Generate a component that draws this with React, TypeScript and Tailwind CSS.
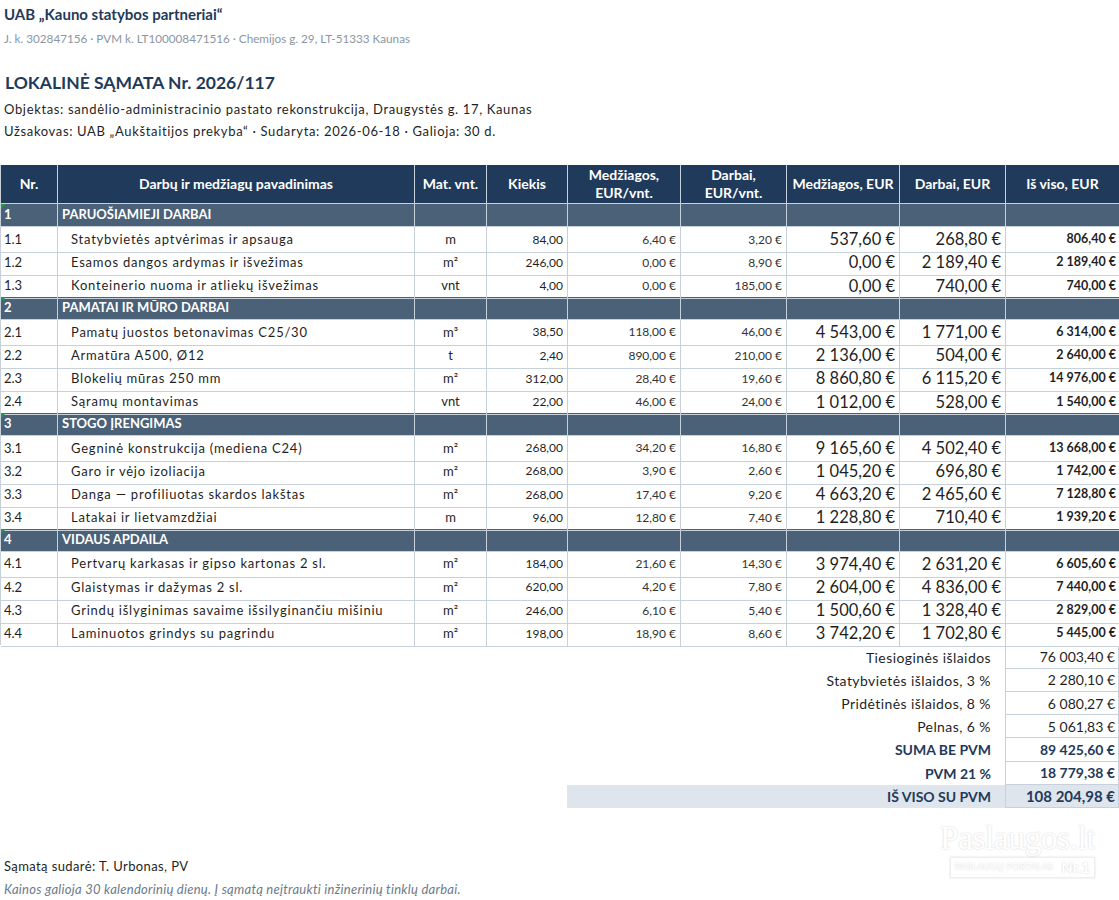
import React from 'react';

type Item = [string, string, string, string, string, string, string, string, string];
type Section = { nr: string; title: string; items: Item[] };

const SECTIONS: Section[] = [
  {
    nr: '1',
    title: 'PARUOŠIAMIEJI DARBAI',
    items: [
      ['1.1', 'Statybvietės aptvėrimas ir apsauga', 'm', '84,00', '6,40 €', '3,20 €', '537,60 €', '268,80 €', '806,40 €'],
      ['1.2', 'Esamos dangos ardymas ir išvežimas', 'm²', '246,00', '0,00 €', '8,90 €', '0,00 €', '2 189,40 €', '2 189,40 €'],
      ['1.3', 'Konteinerio nuoma ir atliekų išvežimas', 'vnt', '4,00', '0,00 €', '185,00 €', '0,00 €', '740,00 €', '740,00 €'],
    ],
  },
  {
    nr: '2',
    title: 'PAMATAI IR MŪRO DARBAI',
    items: [
      ['2.1', 'Pamatų juostos betonavimas C25/30', 'm³', '38,50', '118,00 €', '46,00 €', '4 543,00 €', '1 771,00 €', '6 314,00 €'],
      ['2.2', 'Armatūra A500, Ø12', 't', '2,40', '890,00 €', '210,00 €', '2 136,00 €', '504,00 €', '2 640,00 €'],
      ['2.3', 'Blokelių mūras 250 mm', 'm²', '312,00', '28,40 €', '19,60 €', '8 860,80 €', '6 115,20 €', '14 976,00 €'],
      ['2.4', 'Sąramų montavimas', 'vnt', '22,00', '46,00 €', '24,00 €', '1 012,00 €', '528,00 €', '1 540,00 €'],
    ],
  },
  {
    nr: '3',
    title: 'STOGO ĮRENGIMAS',
    items: [
      ['3.1', 'Gegninė konstrukcija (mediena C24)', 'm²', '268,00', '34,20 €', '16,80 €', '9 165,60 €', '4 502,40 €', '13 668,00 €'],
      ['3.2', 'Garo ir vėjo izoliacija', 'm²', '268,00', '3,90 €', '2,60 €', '1 045,20 €', '696,80 €', '1 742,00 €'],
      ['3.3', 'Danga — profiliuotas skardos lakštas', 'm²', '268,00', '17,40 €', '9,20 €', '4 663,20 €', '2 465,60 €', '7 128,80 €'],
      ['3.4', 'Latakai ir lietvamzdžiai', 'm', '96,00', '12,80 €', '7,40 €', '1 228,80 €', '710,40 €', '1 939,20 €'],
    ],
  },
  {
    nr: '4',
    title: 'VIDAUS APDAILA',
    items: [
      ['4.1', 'Pertvarų karkasas ir gipso kartonas 2 sl.', 'm²', '184,00', '21,60 €', '14,30 €', '3 974,40 €', '2 631,20 €', '6 605,60 €'],
      ['4.2', 'Glaistymas ir dažymas 2 sl.', 'm²', '620,00', '4,20 €', '7,80 €', '2 604,00 €', '4 836,00 €', '7 440,00 €'],
      ['4.3', 'Grindų išlyginimas savaime išsilyginančiu mišiniu', 'm²', '246,00', '6,10 €', '5,40 €', '1 500,60 €', '1 328,40 €', '2 829,00 €'],
      ['4.4', 'Laminuotos grindys su pagrindu', 'm²', '198,00', '18,90 €', '8,60 €', '3 742,20 €', '1 702,80 €', '5 445,00 €'],
    ],
  },
];

const TOTALS = [
  { label: 'Tiesioginės išlaidos', value: '76 003,40 €' },
  { label: 'Statybvietės išlaidos, 3 %', value: '2 280,10 €' },
  { label: 'Pridėtinės išlaidos, 8 %', value: '6 080,27 €' },
  { label: 'Pelnas, 6 %', value: '5 061,83 €' },
  { label: 'SUMA BE PVM', value: '89 425,60 €', strong: true },
  { label: 'PVM 21 %', value: '18 779,38 €', strong: true },
  { label: 'IŠ VISO SU PVM', value: '108 204,98 €', strong: true, grand: true },
];

const COLS = 'grid grid-cols-[57px_357px_72px_81px_113px_106px_113px_106px_114px]';
const nb = (s: string) => s.replace(/ /g, '\u00a0');

const HEAD = [
  'Nr.',
  'Darbų ir medžiagų pavadinimas',
  'Mat. vnt.',
  'Kiekis',
  'Medžiagos,\nEUR/vnt.',
  'Darbai,\nEUR/vnt.',
  'Medžiagos, EUR',
  'Darbai, EUR',
  'Iš viso, EUR',
];

function Flag() {
  return <span className="absolute left-0 top-0 h-0 w-0 border-r-[5px] border-t-[5px] border-r-transparent border-t-[#1f9a3a]" />;
}

export default function App() {
  return (
    <div className="min-h-[900px] w-[1119px] bg-white font-['Lato','Liberation_Sans',sans-serif] text-[#1f1f1f]">
      {/* Header */}
      <div className="px-[4px] pt-[4px]">
        <div className="text-[15px] font-bold leading-[20px] text-[#1f3a5a]">UAB „Kauno statybos partneriai“</div>
        <div className="mt-[7px] text-[11.7px] leading-[14px] text-[#8a96a3]">
          J. k. 302847156 · PVM k. LT100008471516 · Chemijos g. 29, LT-51333 Kaunas
        </div>
        <div className="ml-[1px] mt-[26px] text-[17.5px] font-bold leading-[24px] text-[#1f3a5a]">LOKALINĖ SĄMATA Nr. 2026/117</div>
        <div className="mt-[5px] text-[13px] leading-[18px] tracking-[0.05em]">
          Objektas: sandėlio-administracinio pastato rekonstrukcija, Draugystės g. 17, Kaunas
        </div>
        <div className="mt-[4px] text-[13px] leading-[18px] tracking-[0.05em]">
          Užsakovas: UAB „Aukštaitijos prekyba“ · Sudaryta: 2026-06-18 · Galioja: 30 d.
        </div>
      </div>

      {/* Table */}
      <div className="mt-[25px] border-l border-[#c7d1dc]">
        <div className={`${COLS} h-[39px] bg-[#1f3a5a] text-[14px] font-bold leading-[18px] text-white`}>
          {HEAD.map((h) => (
            <div key={h} className="flex items-center justify-center whitespace-pre-line border-r border-b border-[#c7d1dc] text-center">
              {h}
            </div>
          ))}
        </div>

        {SECTIONS.map((s) => (
          <React.Fragment key={s.nr}>
            <div className={`${COLS} h-[23.2px] bg-[#4b6177] text-[13px] font-bold text-white`}>
              <div className="relative flex items-center border-r border-b border-[#c7d1dc] pl-[3px]">
                <Flag />
                {s.nr}
              </div>
              <div className="flex items-center border-r border-b border-[#c7d1dc] pl-[4px]">{s.title}</div>
              {[0, 1, 2, 3, 4, 5, 6].map((i) => (
                <div key={i} className="border-r border-b border-[#c7d1dc]" />
              ))}
            </div>
            {s.items.map((r) => (
              <div key={r[0]} className={`${COLS} h-[23.2px] text-[13px]`}>
                <div className="flex items-center border-r border-b border-[#c7d1dc] pl-[3px]">{r[0]}</div>
                <div className="flex items-center whitespace-nowrap border-r border-b border-[#c7d1dc] pl-[13px] tracking-[0.06em]">{r[1]}</div>
                <div className="flex items-center justify-center border-r border-b border-[#c7d1dc]">{r[2]}</div>
                <div className="flex items-center justify-end border-r border-b border-[#c7d1dc] pr-[4px] text-[12px]">{nb(r[3])}</div>
                <div className="flex items-center justify-end border-r border-b border-[#c7d1dc] pr-[4px] text-[12px] text-[#333]">{nb(r[4])}</div>
                <div className="flex items-center justify-end border-r border-b border-[#c7d1dc] pr-[4px] text-[12px] text-[#333]">{nb(r[5])}</div>
                <div className="flex items-center justify-end border-r border-b border-[#c7d1dc] pr-[4px] text-[16.5px]">{nb(r[6])}</div>
                <div className="flex items-center justify-end border-r border-b border-[#c7d1dc] pr-[4px] text-[16.5px]">{nb(r[7])}</div>
                <div className="flex items-center justify-end border-r border-b border-[#c7d1dc] pr-[3px] text-[12.5px] font-bold">{nb(r[8])}</div>
              </div>
            ))}
          </React.Fragment>
        ))}
      </div>

      {/* Totals */}
      <div className="mt-px">
        {TOTALS.map((t) => (
          <div key={t.label} className={`${COLS} h-[23.2px] text-[14px]`}>
            <div className="col-span-4" />
            <div
              className={`col-span-4 flex items-center justify-end pr-[14px] ${t.grand ? 'bg-[#dfe5ec]' : ''} ${
                t.strong ? 'font-bold text-[#1f3a5a]' : 'tracking-[0.03em]'
              }`}
            >
              {t.label}
            </div>
            <div
              className={`flex items-center justify-end border-x border-b border-[#c7d1dc] pr-[3px] ${
                t.grand ? 'bg-[#dfe5ec] text-[15px] font-bold text-[#1f3a5a]' : t.strong ? 'font-bold text-[#1f3a5a]' : ''
              }`}
            >
              {nb(t.value)}
            </div>
          </div>
        ))}
      </div>

      {/* Footer */}
      <div className="flex items-end justify-between">
        <div className="px-[4px] pt-[49px]">
          <div className="text-[13px] leading-[18px] tracking-[0.03em]">Sąmatą sudarė: T. Urbonas, PV</div>
          <div className="mt-[5px] text-[13px] italic leading-[18px] tracking-[0.02em] text-[#6b7b8c]">
            Kainos galioja 30 kalendorinių dienų. Į sąmatą neįtraukti inžinerinių tinklų darbai.
          </div>
        </div>
        <div className="mb-[20px] mr-[24px] flex flex-col items-end text-white [text-shadow:0_0_2px_rgba(0,0,0,0.2)]">
          <div className="font-['Liberation_Serif',serif] text-[34px] leading-[34px] tracking-[-0.02em]">Paslaugos.lt</div>
          <div className="mt-[2px] flex items-center gap-[8px] border border-[#eceff2] px-[4px] py-px shadow-[0_0_2px_rgba(0,0,0,0.12)]">
            <span className="text-[9.5px]">PASLAUGŲ PORTALAS</span>
            <span className="text-[15px] font-bold leading-[17px]">Nr.1</span>
          </div>
        </div>
      </div>
    </div>
  );
}
